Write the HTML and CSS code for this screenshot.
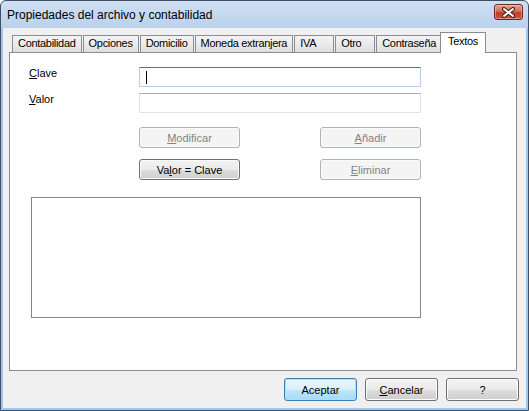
FILE: index.html
```html
<!DOCTYPE html>
<html lang="es">
<head>
  <meta charset="UTF-8">
  <title>Propiedades del archivo y contabilidad</title>
  <link rel="stylesheet" href="styles.css">
</head>
<body>
  <div class="window">
    <div class="titlebar">
      <span class="title">Propiedades del archivo y contabilidad</span>
      <button class="close" type="button" aria-label="Cerrar">
        <svg width="13" height="11" viewBox="0 0 13 11">
          <path d="M2 2 L11 9 M11 2 L2 9" stroke="#4a1e16" stroke-width="4" stroke-linecap="round"/>
          <path d="M2 2 L11 9 M11 2 L2 9" stroke="#ffffff" stroke-width="2" stroke-linecap="round"/>
        </svg>
      </button>
    </div>

    <div class="client">
      <div class="tabs">
        <div class="tab">Contabilidad</div>
        <div class="tab">Opciones</div>
        <div class="tab">Domicilio</div>
        <div class="tab">Moneda extranjera</div>
        <div class="tab">IVA</div>
        <div class="tab">Otro</div>
        <div class="tab">Contraseña</div>
        <div class="tab active">Textos</div>
      </div>

      <div class="panel">
        <div class="field">
          <label><u>C</u>lave</label>
          <div class="textbox focused"><span class="caret"></span></div>
        </div>
        <div class="field">
          <label><u>V</u>alor</label>
          <div class="textbox"></div>
        </div>

        <div class="btn-row first">
          <button class="btn" type="button" disabled><u>M</u>odificar</button>
          <button class="btn" type="button" disabled><u>A</u>ñadir</button>
        </div>
        <div class="btn-row">
          <button class="btn" type="button">Va<u>l</u>or = Clave</button>
          <button class="btn" type="button" disabled><u>E</u>liminar</button>
        </div>

        <div class="list"></div>
      </div>

      <div class="actions">
        <button class="btn wide default" type="button">Aceptar</button>
        <button class="btn wide" type="button"><u>C</u>ancelar</button>
        <button class="btn wide" type="button">?</button>
      </div>
    </div>
  </div>
</body>
</html>
```

FILE: styles.css
```css
body {
  margin: 0;
  font-family: "Liberation Sans", Arial, sans-serif;
  font-size: 11px;
  color: #000;
  background: #fff;
}

/* window frame */
.window {
  width: 529px;
  height: 411px;
  box-sizing: border-box;
  display: flex;
  flex-direction: column;
  border: 1px solid #3d5068;
  border-radius: 6px 6px 0 0;
  background: linear-gradient(#d0e0f3, #bad1eb 27px, #9fc8ee 28px);
}

.titlebar {
  height: 27px;
  display: flex;
  align-items: center;
  justify-content: space-between;
  padding-left: 6px;
}
.title {
  font-size: 12px;
}
.close {
  align-self: flex-start;
  margin: 3px 5px 0 0;
  width: 29px;
  height: 16px;
  padding: 0;
  display: flex;
  align-items: center;
  justify-content: center;
  border: 1px solid #6b2a1e;
  border-radius: 3px;
  background: linear-gradient(#e4a08e, #d0715a 45%, #bc3f25 55%, #c9583c);
  box-shadow: inset 0 0 0 1px rgba(255, 255, 255, 0.35);
}

/* client area */
.client {
  flex: 1;
  display: flex;
  flex-direction: column;
  margin: 0 2px 2px 2px;
  padding: 0 9px 7px 6px;
  background: #f0f0f0;
}

.tabs {
  display: flex;
  align-items: flex-end;
  margin-top: 4px;
  padding-left: 3px;
  position: relative;
  z-index: 1;
}
.tab {
  height: 17px;
  box-sizing: border-box;
  min-width: 40px;
  margin-right: 1px;
  padding: 1px 5px 0 5px;
  border: 1px solid #898c95;
  border-bottom: none;
  background: linear-gradient(#f3f3f3, #ebebeb 50%, #dedede);
  letter-spacing: -0.3px;
  white-space: nowrap;
}
.tab.active {
  height: 21px;
  margin: 0 -2px -1px -3px;
  padding: 2px 7px 0 7px;
  background: #fff;
}

.panel {
  flex: 1;
  background: #fff;
  border: 1px solid #898c95;
  padding: 14px 0 0 19px;
}

.field {
  display: flex;
  align-items: flex-start;
  margin-bottom: 6px;
}
.field label {
  width: 110px;
  line-height: 13px;
}
.textbox {
  width: 282px;
  height: 20px;
  box-sizing: border-box;
  display: flex;
  align-items: center;
  padding-left: 6px;
  background: #fff;
  border: 1px solid #e2e3ea;
  border-top-color: #abadb3;
}
.textbox.focused {
  border-color: #b5cfe7;
  border-top-color: #3d7bad;
}
.caret {
  width: 1px;
  height: 13px;
  background: #000;
}

.btn-row {
  display: flex;
  gap: 80px;
  margin: 11px 0 0 110px;
}
.btn-row.first {
  margin-top: 14px;
}

.btn {
  width: 101px;
  height: 21px;
  padding: 0;
  font-family: inherit;
  font-size: 11px;
  color: #000;
  border: 1px solid #707070;
  border-radius: 3px;
  background: linear-gradient(#f2f2f2, #ebebeb 50%, #dddddd 51%, #cfcfcf);
  box-shadow: inset 0 0 0 1px #fcfcfc;
}
.btn:disabled {
  color: #838383;
  border-color: #adb2b5;
  background: #f4f4f4;
}
.btn.wide {
  width: 73px;
  height: 23px;
}
.btn.default {
  border-color: #3c7fb1;
  background: linear-gradient(#eaf6fd, #d9f0fc 50%, #bee6fd 51%, #a7d9f5);
  box-shadow: inset 0 0 0 1px #a8e3fb;
}

.list {
  width: 390px;
  height: 121px;
  box-sizing: border-box;
  margin: 17px 0 0 2px;
  border: 1px solid #828790;
  background: #fff;
}

.actions {
  display: flex;
  justify-content: flex-end;
  gap: 8px;
  margin: 7px -2px 0 0;
}
```
